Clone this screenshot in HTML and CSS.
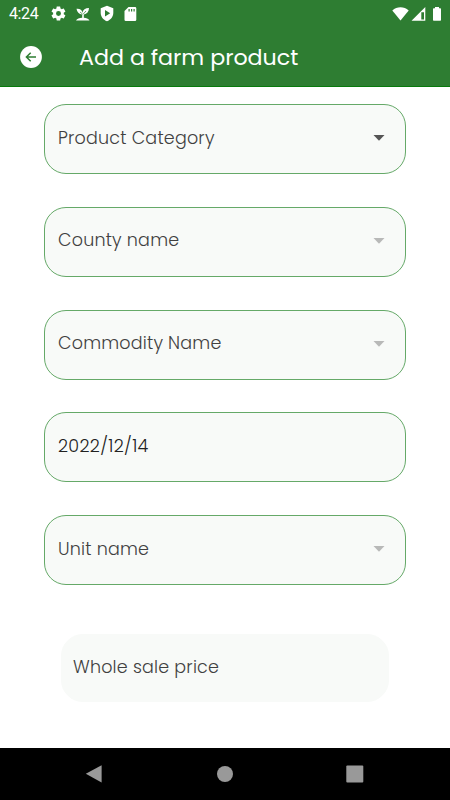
FILE: index.html
```html
<!DOCTYPE html>
<html lang="en">
<head>
  <meta charset="UTF-8">
  <meta name="viewport" content="width=device-width, initial-scale=1.0">
  <title>Add a farm product</title>
  <link rel="stylesheet" href="styles.css">
</head>
<body>
  <header class="header">
    <div class="status-bar">
      <span class="time">4:24</span>
      <div class="status-left">
        <svg width="17" height="17" viewBox="0 0 24 24"><path d="M19.4 13c0-.3.1-.6.1-1s0-.7-.1-1l2.100-1.600c.2-.2.3-.4.1-.7l-2-3.400c-.1-.2-.4-.3-.6-.2l-2.500 1c-.5-.4-1.100-.7-1.700-1l-.4-2.600c0-.3-.2-.5-.5-.5h-4c-.2 0-.4.2-.5.4l-.3 2.700c-.7.2-1.200.6-1.700 1l-2.500-1c-.3-.1-.5 0-.6.2l-2 3.400c-.2.300-.1.500.1.700L4.500 11c0 .3-.1.700-.1 1s0 .7.100 1l-2.100 1.600c-.2.200-.3.400-.1.700l2 3.400c.1.200.3.300.6.200l2.500-1c.5.400 1.100.7 1.700 1l.3 2.600c.1.300.3.500.5.500h4c.3 0 .5-.2.500-.4l.4-2.700c.6-.2 1.200-.6 1.700-1l2.500 1c.2.100.5 0 .6-.2l2-3.400c.1-.2.100-.5-.1-.7zM12 15.500a3.500 3.500 0 1 1 0-7 3.500 3.500 0 0 1 0 7z"/></svg>
        <svg width="16" height="16" viewBox="0 0 16 16"><path d="M1.500 2.800c3.500-.3 5.600 1.200 5.900 4C7.900 4 10.300 2 14 2c-.1 3.700-2 6-5.200 6.500v3.200c2.600.1 4.500 1 5.700 2.800H1c1.200-1.800 3.200-2.700 6.200-2.800V8.500C4 8.200 2 6 1.500 2.800z"/><path class="leaf-vein" d="M8 8.300L11 5M7.500 8L5 6"/></svg>
        <svg width="16" height="17" viewBox="0 0 16 17"><path fill-rule="evenodd" d="M8 .8l6.300 2.400V8c0 3.600-2.500 6.700-6.300 8.300C4.200 14.700 1.700 11.600 1.700 8V3.200zM6 5v6.600l5.200-3.300z"/></svg>
        <svg class="sd-card" width="13" height="16" viewBox="0 0 13 16"><path fill-rule="evenodd" d="M4.500 1H11a1.300 1.300 0 0 1 1.300 1.300v11.400A1.300 1.300 0 0 1 11 15H1.800a1.300 1.300 0 0 1-1.300-1.300V5zM4.500 3v2.500h1.200V3zM7 3v2.500h1.200V3zM9.500 3v2.500h1.200V3z"/></svg>
      </div>
      <div class="status-right">
        <svg width="17" height="14" viewBox="0 0 17 14"><path d="M.3 3.500C5-.7 12-.7 16.700 3.500L8.500 13.600z"/></svg>
        <svg width="15" height="14" viewBox="0 0 15 14"><path fill-rule="evenodd" d="M14.300 0v13.700H.5zM10.300 5.200v7.300H13V5.200z"/></svg>
        <svg width="10" height="14" viewBox="0 0 10 14"><path d="M3 0h4v1.300h1.300c.4 0 .7.300.7.700v11c0 .500-.3.700-.7.700H1.700c-.4 0-.7-.2-.7-.7V2c0-.4.300-.7.700-.7H3z"/></svg>
      </div>
    </div>
    <div class="app-bar">
      <svg class="back" width="22" height="22" viewBox="0 0 22 22"><circle cx="11" cy="11" r="10.900"/><path class="arrow" d="M16 11H6.700M10.700 6.700L6.400 11l4.300 4.300"/></svg>
      <h1 class="title">Add a farm product</h1>
    </div>
  </header>

  <main class="form">
    <div class="field">
      <span class="label">Product Category</span>
      <svg class="caret" width="12" height="6" viewBox="0 0 12 6"><path d="M.5 0h11L6 5.700z"/></svg>
    </div>
    <div class="field disabled">
      <span class="label">County name</span>
      <svg class="caret" width="12" height="6" viewBox="0 0 12 6"><path d="M.5 0h11L6 5.700z"/></svg>
    </div>
    <div class="field disabled">
      <span class="label">Commodity Name</span>
      <svg class="caret" width="12" height="6" viewBox="0 0 12 6"><path d="M.5 0h11L6 5.700z"/></svg>
    </div>
    <div class="field date">
      <span class="label">2022/12/14</span>
    </div>
    <div class="field disabled">
      <span class="label">Unit name</span>
      <svg class="caret" width="12" height="6" viewBox="0 0 12 6"><path d="M.5 0h11L6 5.700z"/></svg>
    </div>
    <div class="field price">
      <span class="label">Whole sale price</span>
    </div>
  </main>

  <nav class="nav-bar">
    <svg width="18" height="20" viewBox="0 0 18 20"><path d="M16.600 1.200v17.200L.8 9.800z"/></svg>
    <svg width="18" height="20" viewBox="0 0 18 20"><circle cx="9" cy="10" r="8"/></svg>
    <svg width="18" height="20" viewBox="0 0 18 20"><rect x=".3" y="1.500" width="17" height="17" rx="1"/></svg>
  </nav>
</body>
</html>
```

FILE: styles.css
```css
* {
  box-sizing: border-box;
}
body {
  margin: 0;
  height: 800px;
  display: flex;
  flex-direction: column;
  overflow: hidden;
  background-color: #fff;
  font-family: Poppins, Inter, "Open Sans", sans-serif;
}
svg {
  display: block;
  flex: none;
}
.header {
  height: 87px;
  background-color: #2e7d32;
  border-bottom: 1px solid #087a0c;
  color: #fff;
  fill: #fff;
}
.status-bar {
  display: flex;
  align-items: center;
  height: 27px;
  padding: 0 8px 0 9px;
}
.time {
  width: 41px;
  font: 16px Roboto, sans-serif;
  letter-spacing: -0.4px;
}
.status-left {
  display: flex;
  align-items: center;
  gap: 8px;
}
.sd-card {
  margin-left: 1px;
}
.status-right {
  display: flex;
  gap: 1px;
  margin-left: auto;
}
.status-right svg:first-child {
  margin-right: 1px;
}
.status-right svg:last-child {
  margin-left: 5px;
}
.leaf-vein {
  fill: none;
  stroke: #2e7d32;
  stroke-width: 0.7;
}
.app-bar {
  display: flex;
  align-items: center;
  height: 60px;
  padding-left: 20px;
}
.arrow {
  fill: none;
  stroke: #2e7d32;
  stroke-width: 1.5;
}
.title {
  margin: 0 0 0 37px;
  font-size: 22.200px;
  font-weight: 400;
}
.form {
  flex: 1;
  display: flex;
  flex-direction: column;
  align-items: center;
  gap: 32.800px;
  padding-top: 17px;
}
.field {
  display: flex;
  align-items: center;
  justify-content: space-between;
  width: 362px;
  height: 70px;
  padding: 0 20px 2px 13px;
  border: 1px solid #65a968;
  border-radius: 22px;
  background-color: #f8faf8;
  color: #404040;
}
.label {
  margin-bottom: 1px;
  font-size: 17.500px;
  font-weight: 300;
  letter-spacing: 0.200px;
  white-space: nowrap;
}
.caret {
  fill: #555;
}
.disabled .caret {
  fill: #b8b9b8;
}
.date {
  color: #222;
}
.date .label {
  letter-spacing: 0.350px;
}
.price {
  width: 328px;
  height: 68px;
  margin-top: 16px;
  padding: 0 11px;
  border-color: #f8faf8;
}
.nav-bar {
  display: flex;
  justify-content: space-between;
  align-items: center;
  height: 52px;
  padding: 0 86px 0 85px;
  background-color: #000;
  fill: #999;
}
```
